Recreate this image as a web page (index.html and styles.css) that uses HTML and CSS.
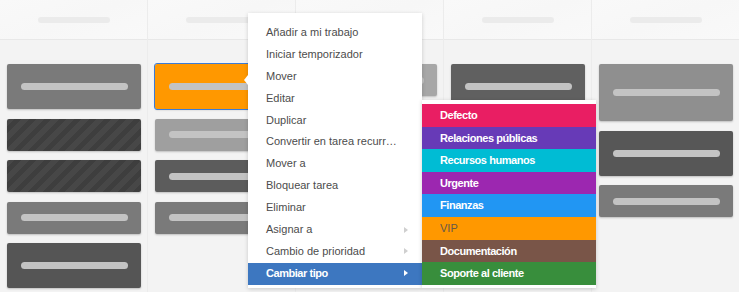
FILE: index.html
```html
<!DOCTYPE html>
<html lang="es">
<head>
<meta charset="utf-8">
<title>Tablero</title>
<link rel="stylesheet" href="styles.css">
</head>
<body>
<div class="board">
  <div class="col">
    <div class="col-head"><span class="head-pill"></span></div>
    <div class="cards">
      <div class="card tall c7a"><span class="pill"></span></div>
      <div class="card short striped"></div>
      <div class="card short striped"></div>
      <div class="card short c7a"><span class="pill"></span></div>
      <div class="card tall c55"><span class="pill"></span></div>
    </div>
  </div>
  <div class="col">
    <div class="col-head"><span class="head-pill"></span></div>
    <div class="cards">
      <div class="card tall orange selected"><span class="pill"></span></div>
      <div class="card short ca0"><span class="pill"></span></div>
      <div class="card short c5c"><span class="pill"></span></div>
      <div class="card short c7a"><span class="pill"></span></div>
    </div>
  </div>
  <div class="col">
    <div class="col-head"><span class="head-pill"></span></div>
    <div class="cards">
      <div class="card short ca8"><span class="pill"></span></div>
      <div class="card tall c7a"><span class="pill"></span></div>
      <div class="card short c55"><span class="pill"></span></div>
    </div>
  </div>
  <div class="col">
    <div class="col-head"><span class="head-pill"></span></div>
    <div class="cards">
      <div class="card tall c60"><span class="pill"></span></div>
      <div class="card short c8f"><span class="pill"></span></div>
    </div>
  </div>
  <div class="col">
    <div class="col-head"><span class="head-pill"></span></div>
    <div class="cards">
      <div class="card xtall c8f"><span class="pill"></span></div>
      <div class="card tall c57"><span class="pill"></span></div>
      <div class="card short c7a"><span class="pill"></span></div>
    </div>
  </div>
</div>

<div class="menu">
  <span class="pointer"></span>
  <div class="item">Añadir a mi trabajo</div>
  <div class="item">Iniciar temporizador</div>
  <div class="item">Mover</div>
  <div class="item">Editar</div>
  <div class="item">Duplicar</div>
  <div class="item">Convertir en tarea recurr…</div>
  <div class="item">Mover a</div>
  <div class="item">Bloquear tarea</div>
  <div class="item">Eliminar</div>
  <div class="item has-sub">Asignar a<span class="arrow"></span></div>
  <div class="item has-sub">Cambio de prioridad<span class="arrow"></span></div>
  <div class="item has-sub active">Cambiar tipo<span class="arrow"></span></div>

  <div class="submenu">
    <div class="sub t-defecto">Defecto</div>
    <div class="sub t-relaciones">Relaciones públicas</div>
    <div class="sub t-recursos">Recursos humanos</div>
    <div class="sub t-urgente">Urgente</div>
    <div class="sub t-finanzas">Finanzas</div>
    <div class="sub t-vip">VIP</div>
    <div class="sub t-doc">Documentación</div>
    <div class="sub t-soporte">Soporte al cliente</div>
  </div>
</div>
</body>
</html>
```

FILE: styles.css
```css
html, body {
  margin: 0;
  padding: 0;
}
body {
  width: 739px;
  height: 292px;
  overflow: hidden;
  background: #f3f3f3;
  font-family: "Liberation Sans", Arial, sans-serif;
  position: relative;
}
.board {
  display: flex;
  height: 292px;
}
.col {
  flex: 1 1 0;
  min-width: 0;
  border-right: 1px solid #ececec;
  display: flex;
  flex-direction: column;
}
.col:last-child {
  border-right: none;
}
.col-head {
  height: 40px;
  box-sizing: border-box;
  border-bottom: 1px solid #e8e8e8;
  background: linear-gradient(160deg, #f9f9f9 0%, #f7f7f7 50%, #f9f9f9 100%);
  display: flex;
  align-items: center;
  justify-content: center;
}
.head-pill {
  display: block;
  width: 72px;
  height: 6px;
  border-radius: 3px;
  background: #ebebeb;
}
.cards {
  display: flex;
  flex-direction: column;
  gap: 9.5px;
  padding: 24px 6px 0 7px;
}
.card {
  border-radius: 2px;
  box-shadow: 0 1px 2px rgba(0, 0, 0, 0.22);
  display: flex;
  align-items: center;
  padding: 0 13px 0 14px;
  flex: none;
}
.short { height: 32px; }
.tall { height: 45px; }
.xtall { height: 57px; }
.pill {
  display: block;
  flex: 1;
  height: 7px;
  border-radius: 4px;
  background: #c3c3c3;
}
.c7a { background: #7a7a7a; }
.c55 { background: #555555; }
.c57 { background: #575757; }
.c5c { background: #5c5c5c; }
.c60 { background: #606060; }
.c8f { background: #8f8f8f; }
.ca0 { background: #9f9f9f; }
.ca8 { background: #a7a7a7; }
.orange { background: #ff9800; }
.selected { outline: 1px solid #3b7bd6; }
.striped {
  background: repeating-linear-gradient(135deg, #474747 0 5.3px, #3e3e3e 5.3px 10.6px);
}

/* context menu */
.menu {
  position: absolute;
  left: 248px;
  top: 13px;
  width: 174px;
  box-sizing: border-box;
  padding: 9px 0 3px;
  background: #fff;
  box-shadow: 0 1px 4px rgba(0, 0, 0, 0.18);
  font-size: 11px;
  color: #4c4c4c;
}
.pointer {
  position: absolute;
  left: -4px;
  top: 62px;
  width: 0;
  height: 0;
  border-top: 5px solid transparent;
  border-bottom: 5px solid transparent;
  border-right: 4px solid #fff;
}
.item {
  height: 21.9px;
  line-height: 21.9px;
  padding-left: 18px;
  white-space: nowrap;
  position: relative;
}
.arrow {
  position: absolute;
  right: 14px;
  top: 7.5px;
  width: 0;
  height: 0;
  border-top: 3.5px solid transparent;
  border-bottom: 3.5px solid transparent;
  border-left: 4px solid #cfcfcf;
}
.item.active {
  background: #3d77c0;
  color: #fff;
  font-weight: bold;
  letter-spacing: -0.45px;
}
.item.active .arrow {
  border-left-color: #fff;
}

.submenu {
  position: absolute;
  left: 174px;
  top: 87px;
  width: 174px;
  box-sizing: border-box;
  padding: 4px 0 3px;
  background: #fff;
  box-shadow: 0 1px 4px rgba(0, 0, 0, 0.18);
}
.sub {
  height: 22.6px;
  line-height: 22.6px;
  padding-left: 18px;
  color: #fff;
  font-weight: bold;
  letter-spacing: -0.45px;
  white-space: nowrap;
}
.t-defecto { background: #e91e63; }
.t-relaciones { background: #673ab7; }
.t-recursos { background: #00bcd4; }
.t-urgente { background: #9c27b0; }
.t-finanzas { background: #2196f3; }
.t-vip { background: #ff9800; color: #66594a; font-weight: normal; letter-spacing: 0; }
.t-doc { background: #795548; }
.t-soporte { background: #388e3c; }
```
